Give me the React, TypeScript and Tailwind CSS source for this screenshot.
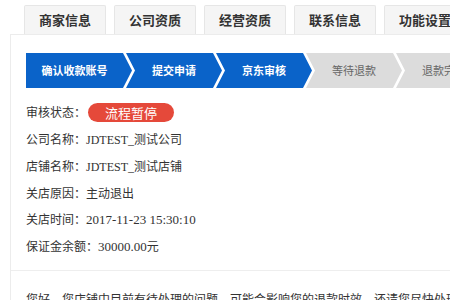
import React from "react";

const tabs = ["商家信息", "公司资质", "经营资质", "联系信息", "功能设置"];
const steps = [
  { t: "确认收款账号", on: true },
  { t: "提交申请", on: true },
  { t: "京东审核", on: true },
  { t: "等待退款", on: false },
  { t: "退款完成", on: false },
];

export default function App() {
  return (
    <div className="w-[450px] h-[300px] overflow-hidden bg-white text-[#333] [font-family:'Noto_Sans_CJK_SC',sans-serif]">
      <div className="flex gap-[8px] pl-[24px] pt-[5px] h-[34px]">
        {tabs.map((t) => (
          <div
            key={t}
            className="w-[82px] shrink-0 h-[29px] flex items-center justify-center bg-[#f5f5f5] border border-b-0 border-[#e6e6e6] rounded-t-[2px] text-[13px] font-bold text-[#333]"
          >
            {t}
          </div>
        ))}
      </div>
      <div className="ml-[10px] border-l border-t border-[#ececec] h-[266px]">
        <div className="pt-[18px] pl-[15px] flex h-[53px]">
          {steps.map((s, i) => (
            <div
              key={s.t}
              className={
                (i === 0
                  ? "w-[106px] [clip-path:polygon(0_0,calc(100%_-_9px)_0,100%_50%,calc(100%_-_9px)_100%,0_100%)] "
                  : "w-[96px] -ml-[6px] pl-[9px] [clip-path:polygon(0_0,calc(100%_-_9px)_0,100%_50%,calc(100%_-_9px)_100%,0_100%,9px_50%)] ") +
                "shrink-0 h-[35px] flex items-center justify-center pr-[9px] text-[11px] " +
                (s.on ? "bg-[#0a63c9] text-white font-bold" : "bg-[#dcdcdc] text-[#666]")
              }
            >
              {s.t}
            </div>
          ))}
        </div>
        <div className="pl-[15px] pt-[12px] text-[12px] leading-[26px]">
          <div className="flex items-center h-[24px]">
            <span>审核状态：</span>
            <span className="ml-[2px] w-[86px] h-[19px] rounded-full bg-[#e5493a] text-white text-[13px] leading-[19px] flex items-center justify-center">
              流程暂停
            </span>
          </div>
          <div className="mt-[2px]">
            公司名称：<span className="[font-family:'Liberation_Serif','Noto_Sans_CJK_SC',serif]">JDTEST_</span>测试公司
          </div>
          <div>
            店铺名称：<span className="[font-family:'Liberation_Serif','Noto_Sans_CJK_SC',serif]">JDTEST_</span>测试店铺
          </div>
          <div>关店原因：主动退出</div>
          <div>
            关店时间：<span className="[font-family:'Liberation_Serif',serif] text-[13px]">2017-11-23 15:30:10</span>
          </div>
          <div>
            保证金余额：<span className="[font-family:'Liberation_Serif',serif] text-[13px]">30000.00</span>元
          </div>
        </div>
        <div className="mt-[10px] border-t border-[#eeeeee] pt-[18px] pl-[15px] whitespace-nowrap text-[12px] leading-[20px]">
          您好，您店铺中目前有待处理的问题，可能会影响您的退款时效，还请您尽快处理。
        </div>
      </div>
    </div>
  );
}
